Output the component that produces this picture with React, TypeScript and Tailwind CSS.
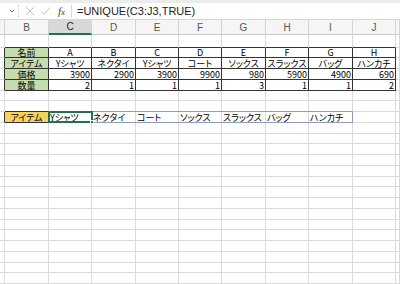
import { ChevronDown } from "lucide-react";

type Align = "l" | "c" | "r";
type Cell = { t: string; align: Align; fill?: "green" | "yellow" };

// column widths in px, A and K are cut off at the edges
const COLS = [
  { key: "A", w: "w-[5px]" },
  { key: "B", w: "w-[44px]" },
  { key: "C", w: "w-[43px]" },
  { key: "D", w: "w-[44px]" },
  { key: "E", w: "w-[43px]" },
  { key: "F", w: "w-[43px]" },
  { key: "G", w: "w-[44px]" },
  { key: "H", w: "w-[43px]" },
  { key: "I", w: "w-[44px]" },
  { key: "J", w: "w-[43px]" },
  { key: "K", w: "flex-1" },
];

const names = ["A", "B", "C", "D", "E", "F", "G", "H"];
const items = ["Yシャツ", "ネクタイ", "Yシャツ", "コート", "ソックス", "スラックス", "バッグ", "ハンカチ"];
const prices = ["3900", "2900", "3900", "9900", "980", "5900", "4900", "690"];
const counts = ["2", "1", "1", "1", "3", "1", "1", "2"];
const unique = ["Yシャツ", "ネクタイ", "コート", "ソックス", "スラックス", "バッグ", "ハンカチ"];

const cells: Record<string, Cell> = {};
const put = (row: number, label: string, values: string[], align: Align) => {
  cells[`1:${row}`] = { t: label, align: "c", fill: "green" };
  values.forEach((v, i) => (cells[`${i + 2}:${row}`] = { t: v, align }));
};
put(2, "名前", names, "c");
put(3, "アイテム", items, "c");
put(4, "価格", prices, "r");
put(5, "数量", counts, "r");
cells["1:8"] = { t: "アイテム", align: "c", fill: "yellow" };
unique.forEach((v, i) => (cells[`${i + 2}:8`] = { t: v, align: "l" }));

// cells that get a dark outline
const boxed = (r: number, c: number) =>
  (r >= 2 && r <= 5 && c >= 1 && c <= 9) || (r === 8 && c === 1);

// sheet rows below the column header: row 1 is taller, then ~10.75px rows
const ROWS = Array.from({ length: 23 }, (_, i) => {
  const r = i + 1;
  if (r === 1) return { r, h: 13 };
  const top = Math.floor(48 + (r - 2) * 10.75);
  const bottom = Math.floor(48 + (r - 1) * 10.75);
  return { r, h: bottom - top };
});

const font = { fontFamily: '"Noto Sans CJK JP", "Noto Sans", sans-serif' };

function FormulaBar() {
  return (
    <div className="flex h-[20px] items-center border-t-[3px] border-b border-t-[#ececec] border-b-[#d6d6d6] bg-white">
      <div className="flex h-full w-[18px] items-center justify-end pr-[2px]">
        <ChevronDown size={8} strokeWidth={2.5} className="text-[#555]" />
      </div>
      <div className="h-[12px] border-l border-dotted border-[#c8c8c8]" />
      <div className="flex w-[52px] items-center">
        <svg width="10" height="10" viewBox="0 0 10 10" className="ml-[6px]">
          <path d="M1 1 L9 9 M9 1 L1 9" stroke="#c4c4c4" strokeWidth="1" fill="none" />
        </svg>
        <svg width="11" height="10" viewBox="0 0 11 10" className="ml-[5px]">
          <path d="M1 5.5 L4 8.5 L10 1.5" stroke="#c4c4c4" strokeWidth="1" fill="none" />
        </svg>
        <span
          className="ml-[7px] text-[11px] italic text-[#444]"
          style={{ fontFamily: '"Liberation Serif", serif' }}
        >
          f<span className="text-[9px]">x</span>
        </span>
      </div>
      <div className="h-[12px] border-l border-[#d6d6d6]" />
      <span
        className="ml-[5px] text-[11px] text-[#222]"
        style={{ fontFamily: '"Liberation Sans", Arial, sans-serif' }}
      >
        =UNIQUE(C3:J3,TRUE)
      </span>
    </div>
  );
}

function ColumnHeader() {
  return (
    <div className="flex h-[15px]" style={{ fontFamily: '"Liberation Sans", Arial, sans-serif' }}>
      {COLS.map((col) => (
        <div
          key={col.key}
          className={`${col.w} flex shrink-0 items-center justify-center overflow-hidden border-r border-r-[#d4d4d4] text-[10px] ${
            col.key === "C"
              ? "border-b-2 border-b-[#217346] bg-[#d8d8d8] text-[#222]"
              : "border-b border-b-[#c8c8c8] bg-[#f5f5f5] text-[#555]"
          }`}
        >
          {col.key === "A" || col.key === "K" ? "" : col.key}
        </div>
      ))}
    </div>
  );
}

function SheetRow({ r, h }: { r: number; h: number }) {
  return (
    <div className={`relative flex ${h === 13 ? "h-[13px]" : h === 11 ? "h-[11px]" : "h-[10px]"}`}>
      {COLS.map((col, c) => {
        const cell = cells[`${c}:${r}`];
        const right = boxed(r, c) || boxed(r, c + 1);
        const bottom = boxed(r, c) || boxed(r + 1, c);
        return (
          <div
            key={col.key}
            className={`${col.w} flex shrink-0 items-center overflow-hidden whitespace-nowrap border-r border-b px-[1px] text-[9px] leading-[9px] text-black [font-feature-settings:'palt'] ${
              right ? "border-r-[#333]" : "border-r-[#dadada]"
            } ${bottom ? "border-b-[#333]" : "border-b-[#dadada]"} ${
              cell?.fill === "green" ? "bg-[#c4dcae]" : cell?.fill === "yellow" ? "bg-[#f7d35e]" : "bg-white"
            } ${
              cell?.align === "c" ? "justify-center" : cell?.align === "r" ? "justify-end" : "justify-start"
            }`}
          >
            {cell?.t}
          </div>
        );
      })}

      {r === 8 && (
        <>
          {/* spill range of the UNIQUE result */}
          <div className="pointer-events-none absolute left-[48px] top-[-1px] h-[12px] w-[305px] border border-[#8c9cc6]" />
          {/* active cell */}
          <div className="pointer-events-none absolute left-[48px] top-[-1px] h-[12px] w-[45px] border-2 border-[#217346]">
            <div className="absolute bottom-[-3px] right-[-3px] h-[4px] w-[4px] border border-white bg-[#217346]" />
          </div>
        </>
      )}
    </div>
  );
}

export default function App() {
  return (
    <div className="h-[284px] w-[400px] overflow-hidden bg-white" style={font}>
      <FormulaBar />
      <ColumnHeader />
      {ROWS.map((row) => (
        <SheetRow key={row.r} r={row.r} h={row.h} />
      ))}
    </div>
  );
}
